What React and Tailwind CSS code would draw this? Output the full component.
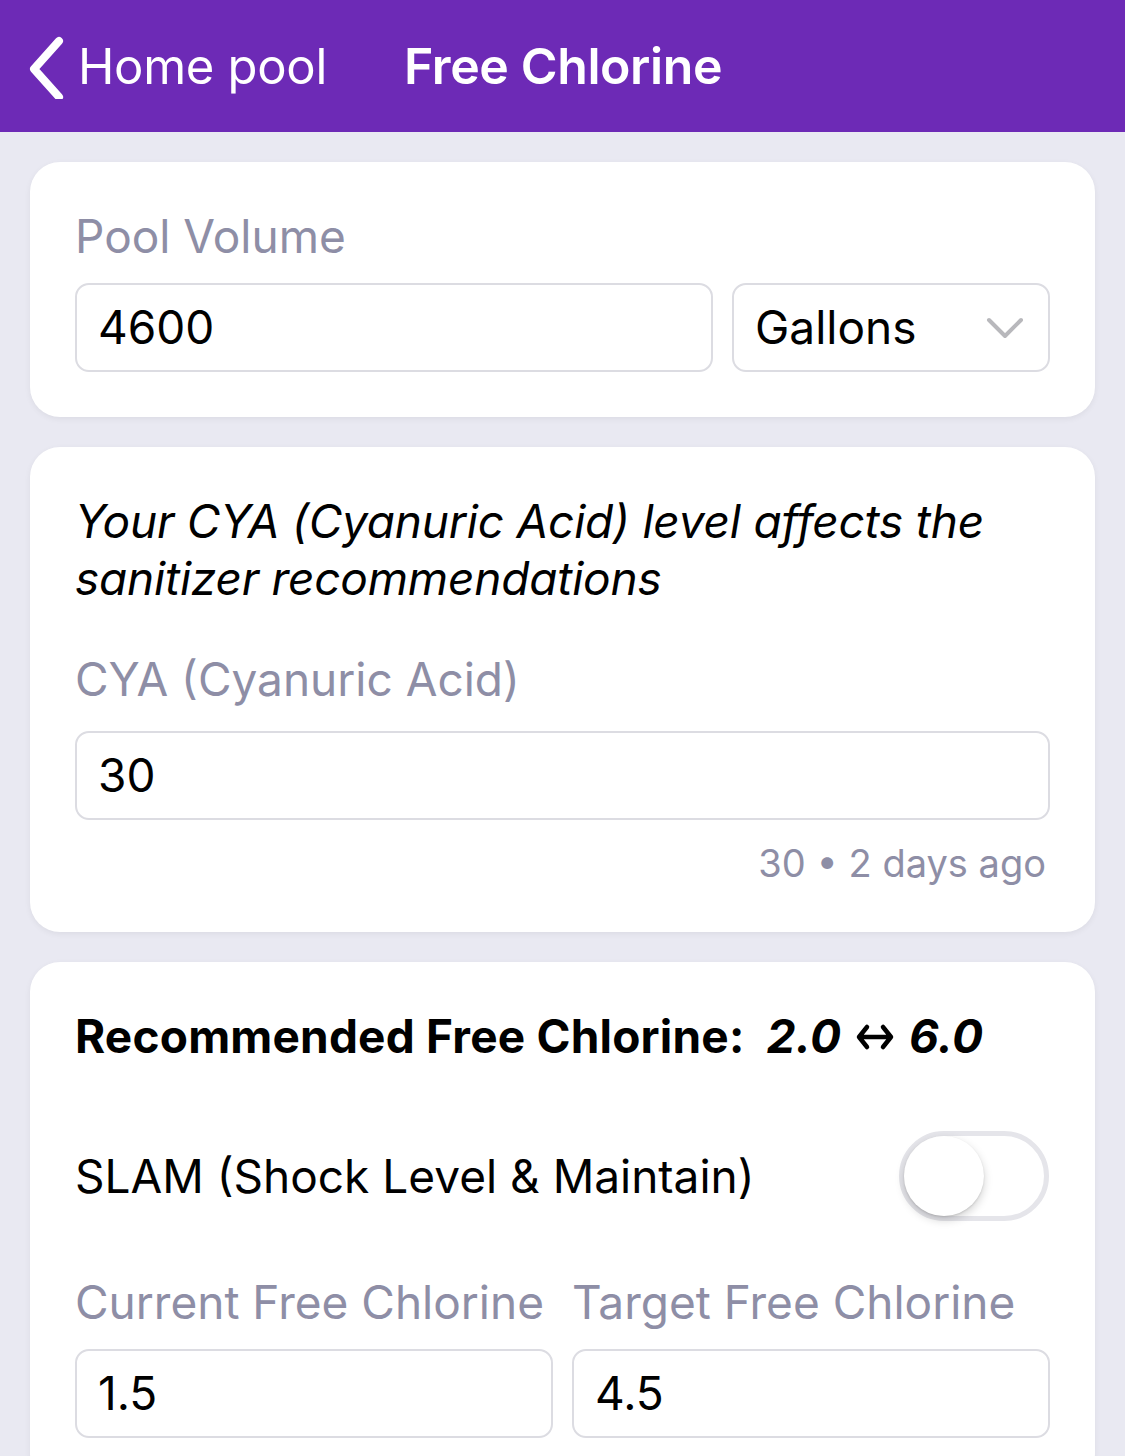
import React from "react";

const font = { fontFamily: "Inter, 'Noto Sans', sans-serif" };

function Input({ value, className = "" }) {
  return (
    <div className={"h-[89px] rounded-[14px] border-2 border-[#dcdce2] bg-white flex items-center px-[21px] text-[46px] text-black " + className}>
      {value}
    </div>
  );
}

export default function App() {
  return (
    <div style={font} className="w-[1125px] h-[1456px] overflow-hidden bg-[#e9e9f2]">
      <div className="h-[132px] bg-[#6d2ab6] flex items-center text-white">
        <svg width="40" height="64" viewBox="0 0 40 64" className="ml-[26px] mt-[2px]">
          <path d="M33 6 L8 34 L33 62" fill="none" stroke="white" strokeWidth="8" strokeLinecap="round" strokeLinejoin="round" />
        </svg>
        <span className="ml-[12px] text-[49px] leading-none tracking-[-0.3px]">Home pool</span>
        <span className="ml-[77px] text-[50px] font-semibold leading-none tracking-[-0.4px]">Free Chlorine</span>
      </div>

      <div className="px-[30px] pt-[30px] flex flex-col gap-[30px]">
        <div className="bg-white rounded-[30px] shadow-[0_2px_6px_rgba(0,0,0,0.06)] px-[45px] pt-[48px] pb-[45px]">
          <div className="text-[46px] leading-[52px] text-[#8e8ea6]">Pool Volume</div>
          <div className="mt-[21px] flex gap-[19px]">
            <Input value="4600" className="flex-1" />
            <div className="w-[318px] h-[89px] rounded-[14px] border-2 border-[#dcdce2] bg-white flex items-center justify-between pl-[21px] pr-[24px] text-[46px] text-black">
              <span>Gallons</span>
              <svg width="38" height="22" viewBox="0 0 38 22">
                <path d="M3 3 L19 19 L35 3" fill="none" stroke="#b8b8bc" strokeWidth="4" strokeLinecap="round" strokeLinejoin="round" />
              </svg>
            </div>
          </div>
        </div>

        <div className="bg-white rounded-[30px] shadow-[0_2px_6px_rgba(0,0,0,0.06)] px-[45px] pt-[46px] pb-[46px]">
          <div className="italic text-[46px] leading-[57px] text-black tracking-[-0.2px]">
            Your CYA (Cyanuric Acid) level affects the sanitizer recommendations
          </div>
          <div className="mt-[46px] text-[46px] leading-[52px] text-[#8e8ea6]">CYA (Cyanuric Acid)</div>
          <div className="mt-[26px]">
            <Input value="30" />
          </div>
          <div className="mt-[20px] text-right pr-[4px] text-[38px] leading-[46px] text-[#8e8ea6]">30 • 2 days ago</div>
        </div>

        <div className="bg-white rounded-[30px] shadow-[0_2px_6px_rgba(0,0,0,0.06)] px-[45px] pt-[46px] pb-[45px]">
          <div className="flex items-center text-[46px] leading-[56px] font-bold text-black tracking-[0.2px]">
            <span>Recommended Free Chlorine:</span>
            <span className="italic ml-[22px]">2.0</span>
            <svg width="38" height="30" viewBox="0 0 38 30" className="mx-[15px] mt-[2px]">
              <path d="M11 5 L3 15 L11 25 M3 15 H35 M27 5 L35 15 L27 25" fill="none" stroke="black" strokeWidth="4.5" strokeLinecap="round" strokeLinejoin="round" />
            </svg>
            <span className="italic">6.0</span>
          </div>
          <div className="mt-[67px] flex items-center justify-between">
            <span className="text-[46px] text-black">SLAM (Shock Level &amp; Maintain)</span>
            <div className="relative w-[150px] h-[90px] rounded-full border-[5px] border-[#e5e5ea] bg-white mr-[1px]">
              <div className="absolute left-0 top-0 w-[80px] h-[80px] rounded-full bg-white shadow-[0_4px_10px_rgba(0,0,0,0.18),0_1px_2px_rgba(0,0,0,0.12)]" />
            </div>
          </div>
          <div className="mt-[55px] grid grid-cols-2 gap-[19px]">
            <div>
              <div className="text-[46px] leading-[52px] text-[#8e8ea6] whitespace-nowrap">Current Free Chlorine</div>
              <Input value="1.5" className="mt-[21px]" />
            </div>
            <div>
              <div className="text-[46px] leading-[52px] text-[#8e8ea6] whitespace-nowrap">Target Free Chlorine</div>
              <Input value="4.5" className="mt-[21px]" />
            </div>
          </div>
        </div>
      </div>
    </div>
  );
}
